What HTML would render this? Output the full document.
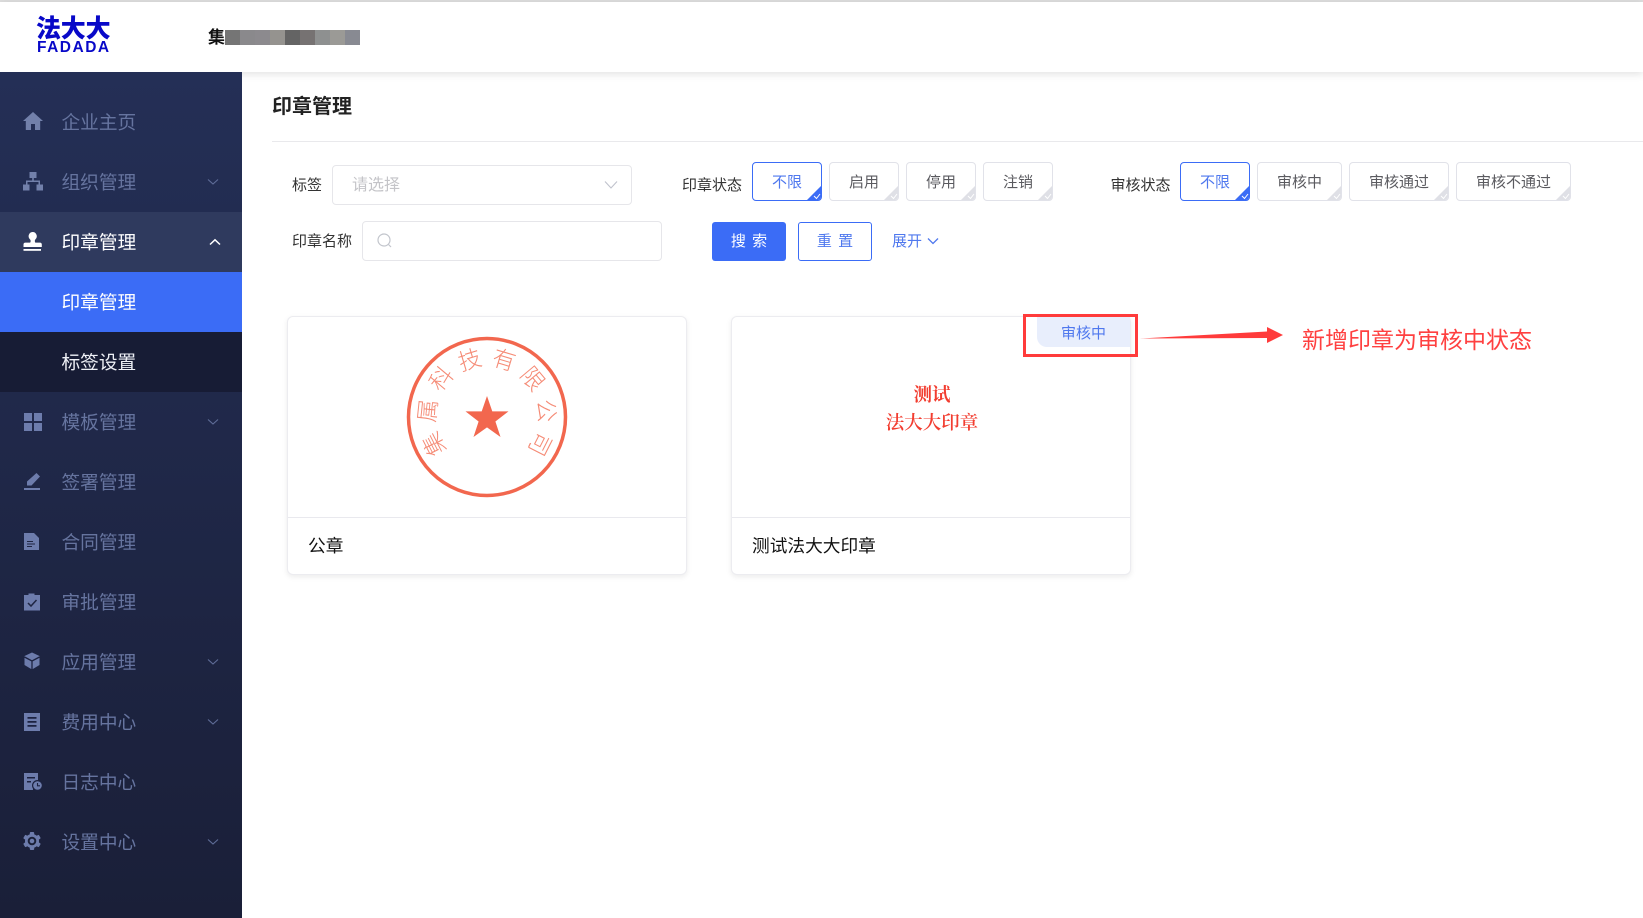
<!DOCTYPE html>
<html lang="zh"><head><meta charset="utf-8"><title>印章管理</title>
<style>
*{box-sizing:border-box}
html,body{margin:0;padding:0;width:1643px;height:918px;overflow:hidden;background:#fff}
body{position:relative;font-family:"Liberation Sans","Noto Sans CJK SC",sans-serif;color:#333}
.a{position:absolute;white-space:nowrap}
#side{position:absolute;left:0;top:72px;width:242px;height:846px;background:linear-gradient(#242f56,#1a1f38)}
.row{position:absolute;left:0;width:242px;height:60px}
.row .t{position:absolute;left:61.5px;top:1px;line-height:60px;font-size:18.7px;color:#66749f}
.row svg.i{position:absolute;left:23px;top:20px}
.row svg.c{position:absolute;left:207px;top:26px}
.chip{position:absolute;top:162px;height:39px;border:1px solid #e1e2e9;border-radius:4px;text-align:center;line-height:39px;font-size:15px;color:#5a5a5f;overflow:hidden;background:#fff}
.chip.on{border-color:#3b6cf6;color:#4f78ee}
.chip svg{position:absolute;right:-1px;bottom:-1px}
.lbl{position:absolute;font-size:15px;line-height:20px;color:#333;white-space:nowrap}
.card{position:absolute;top:316px;width:400px;height:259px;border:1px solid #ececf0;border-radius:6px;background:#fff;box-shadow:0 2px 6px rgba(0,0,0,.08)}
.card .d{position:absolute;left:0;right:0;top:200px;height:1px;background:#e9e9ee}
.card .n{position:absolute;left:20px;top:214px;line-height:30px;font-size:17.7px;color:#111;white-space:nowrap}
</style></head><body>
<div class="a" style="left:0;top:0;width:1643px;height:2px;background:#dedede"></div>
<div class="a" style="left:0;top:2px;width:1643px;height:70px;background:#fff;box-shadow:0 2px 8px rgba(0,0,0,.12)"></div>

<div class="a" style="left:36px;top:13px;font-size:25px;line-height:32px;font-weight:900;color:#0808c8;letter-spacing:-.2px">法大大</div>
<div class="a" style="left:37px;top:39px;font-size:15.5px;line-height:18px;font-weight:700;color:#0808c8;letter-spacing:1.5px;font-family:'Liberation Sans',sans-serif">FADADA</div>

<div class="a" style="left:208px;top:26px;font-size:17px;line-height:24px;font-weight:700;color:#111">集</div>
<svg class="a" style="left:225px;top:30px" width="135" height="15"><rect x="0" width="15" height="15" fill="#757575"/><rect x="15" width="15" height="15" fill="#8a898c"/><rect x="30" width="15" height="15" fill="#8c8a8e"/><rect x="45" width="15" height="15" fill="#95938f"/><rect x="60" width="15" height="15" fill="#646464"/><rect x="75" width="15" height="15" fill="#767272"/><rect x="90" width="15" height="15" fill="#8e9090"/><rect x="105" width="15" height="15" fill="#9b9a96"/><rect x="120" width="15" height="15" fill="#888a92"/></svg>

<div id="side">
<div class="row" style="top:20px"><svg class="i" style="top:19px" width="20" height="20" viewBox="0 0 20 20"><path fill="#7280aa" d="M10 1 L20 10 H17.2 V19 H12 V13 H8 V19 H2.8 V10 H0 Z"/></svg><span class="t">企业主页</span></div>
<div class="row" style="top:80px"><svg class="i" width="20" height="20" viewBox="0 0 20 20"><path fill="#7280aa" d="M6.5 0H13.500V6H10.800V8.500H17V12.500H20V18.500H13.500V12.500H15.500V10H4.500V12.500H6.500V18.500H0V12.500H3V8.500H9.200V6H6.500Z"/></svg><span class="t">组织管理</span><svg class="c" width="12" height="8" viewBox="0 0 12 8"><path d="M1 1.500L6 6L11 1.500" fill="none" stroke="#5f6d98" stroke-width="1.100"/></svg></div>
<div class="row" style="top:140px;background:#2f3a5e"><svg class="i" width="20" height="20" viewBox="0 0 20 20"><path fill="#fff" d="M9.500 0a4.200 4.200 0 0 1 3 7.200c-.8.900-.9 2.300-.2 3.400h4.700c1.100 0 1.800.8 1.800 1.800V15H.5v-2.600c0-1 .7-1.800 1.800-1.800h4.900c.7-1.100.6-2.500-.3-3.400A4.200 4.200 0 0 1 9.500 0Z"/><rect x=".5" y="17" width="17.500" height="1.800" fill="#fff"/></svg><span class="t" style="color:#fff">印章管理</span><svg class="c" style="left:209px" width="12" height="8" viewBox="0 0 12 8"><path d="M1 6.500L6 1.800L11 6.500" fill="none" stroke="#fff" stroke-width="1.500"/></svg></div>
<div class="row" style="top:200px;background:#3b6cf6"><span class="t" style="color:#fff">印章管理</span></div>
<div class="row" style="top:260px;background:#171c35"><span class="t" style="color:#eef0f6">标签设置</span></div>
<div class="row" style="top:320px"><svg class="i" style="top:21px" width="20" height="20" viewBox="0 0 20 20"><path fill="#6d7cac" d="M1 0H9V8H1ZM11 0H19V8H11ZM1 10H9V18H1ZM11 10H19V18H11Z"/></svg><span class="t">模板管理</span><svg class="c" width="12" height="8" viewBox="0 0 12 8"><path d="M1 1.500L6 6L11 1.500" fill="none" stroke="#5f6d98" stroke-width="1.100"/></svg></div>
<div class="row" style="top:380px"><svg class="i" width="20" height="20" viewBox="0 0 20 20"><path fill="#6d7cac" d="M13.500 1L17 4.500L8.500 13.500H4V9.500ZM1 16H17V18H1Z"/></svg><span class="t">签署管理</span></div>
<div class="row" style="top:440px"><svg class="i" width="20" height="20" viewBox="0 0 20 20"><path fill="#6d7cac" d="M1 1H11L16 6V18H1Z"/><path fill="#1f2542" d="M4 9H10V10H4ZM4 11.500H12V12.500H4ZM4 14H9V15H4Z"/></svg><span class="t">合同管理</span></div>
<div class="row" style="top:500px"><svg class="i" width="20" height="20" viewBox="0 0 20 20"><path fill="#6d7cac" d="M1 3H5.500V1.500H11.500V3H17V18.500H1Z"/><path d="M5 11L8 14L13.500 8" fill="none" stroke="#1f2542" stroke-width="1.500"/></svg><span class="t">审批管理</span></div>
<div class="row" style="top:560px"><svg class="i" width="20" height="20" viewBox="0 0 20 20"><path fill="#6d7cac" d="M9 .5L16.500 4V13L9 17.500L1.500 13V4Z"/><path d="M1.500 5L9 9L16.500 5M9 9V17.500" fill="none" stroke="#1c2240" stroke-width="1.300"/></svg><span class="t">应用管理</span><svg class="c" width="12" height="8" viewBox="0 0 12 8"><path d="M1 1.500L6 6L11 1.500" fill="none" stroke="#5f6d98" stroke-width="1.100"/></svg></div>
<div class="row" style="top:620px"><svg class="i" width="20" height="20" viewBox="0 0 20 20"><path fill="#6d7cac" d="M1 1H17V19H1Z"/><path fill="#1c2240" d="M4.500 5H13.500V6.800H4.500ZM4.500 9H13.500V10.800H4.500ZM4.500 13H13.500V14.800H4.500Z"/></svg><span class="t">费用中心</span><svg class="c" width="12" height="8" viewBox="0 0 12 8"><path d="M1 1.500L6 6L11 1.500" fill="none" stroke="#5f6d98" stroke-width="1.100"/></svg></div>
<div class="row" style="top:680px"><svg class="i" width="20" height="20" viewBox="0 0 20 20"><path fill="#6d7cac" d="M1 1H15V10H10V18H1Z"/><path fill="#1c2240" d="M4 5H12V6.500H4ZM4 9H8V10.500H4Z"/><circle cx="14.500" cy="13.500" r="5.500" fill="#1c2240"/><circle cx="14.500" cy="13.500" r="4.300" fill="#6d7cac"/><path d="M14.500 11V13.800H17" fill="none" stroke="#1c2240" stroke-width="1.100"/></svg><span class="t">日志中心</span></div>
<div class="row" style="top:740px"><svg class="i" style="top:19px" width="20" height="20" viewBox="0 0 20 20"><g fill="#6d7cac"><circle cx="9" cy="10" r="7"/><rect x="6.800" y="1" width="4.400" height="18" rx="1"/><rect x="6.800" y="1" width="4.400" height="18" rx="1" transform="rotate(60 9 10)"/><rect x="6.800" y="1" width="4.400" height="18" rx="1" transform="rotate(120 9 10)"/></g><circle cx="9" cy="10" r="3.300" fill="none" stroke="#1a2038" stroke-width="2"/></svg><span class="t">设置中心</span><svg class="c" width="12" height="8" viewBox="0 0 12 8"><path d="M1 1.500L6 6L11 1.500" fill="none" stroke="#5f6d98" stroke-width="1.100"/></svg></div>
</div>

<div class="a" style="left:272px;top:93px;font-size:20px;line-height:28px;font-weight:700;color:#222">印章管理</div>
<div class="a" style="left:272px;top:141px;width:1371px;height:1px;background:#e9e9ec"></div>

<div class="lbl" style="left:292px;top:175.5px">标签</div>
<div class="a" style="left:332px;top:165px;width:300px;height:40px;border:1px solid #e6e6ea;border-radius:4px;font-size:16px;line-height:40px;padding-left:19px;color:#c4c4c8">请选择</div>
<svg class="a" style="left:604px;top:180px" width="14" height="10" viewBox="0 0 14 10"><path d="M1 1.500L7 8L13 1.500" fill="none" stroke="#bfc2cc" stroke-width="1.100"/></svg>
<div class="lbl" style="left:292px;top:232px">印章名称</div>
<div class="a" style="left:362px;top:221px;width:300px;height:40px;border:1px solid #e6e6ea;border-radius:4px"></div>
<svg class="a" style="left:376px;top:232px" width="18" height="18" viewBox="0 0 18 18"><circle cx="8" cy="8" r="6" fill="none" stroke="#c2c5cc" stroke-width="1.200"/><path d="M12.500 12.500L15 15" stroke="#c2c5cc" stroke-width="1.200"/></svg>

<div class="lbl" style="left:682px;top:175.5px">印章状态</div>
<div class="chip on" style="left:752px;width:70px">不限<svg width="16" height="16" viewBox="0 0 16 16"><path d="M16 0V16H0Z" fill="#3b6cf6"/><path d="M8 11L10.500 13.500L14 9" fill="none" stroke="#fff" stroke-width="1"/></svg></div>
<div class="chip" style="left:829px;width:70px">启用<svg width="16" height="16" viewBox="0 0 16 16"><path d="M16 0V16H0Z" fill="#dfe0e6"/><path d="M8 11L10.500 13.500L14 9" fill="none" stroke="#fff" stroke-width="1"/></svg></div>
<div class="chip" style="left:906px;width:70px">停用<svg width="16" height="16" viewBox="0 0 16 16"><path d="M16 0V16H0Z" fill="#dfe0e6"/><path d="M8 11L10.500 13.500L14 9" fill="none" stroke="#fff" stroke-width="1"/></svg></div>
<div class="chip" style="left:983px;width:70px">注销<svg width="16" height="16" viewBox="0 0 16 16"><path d="M16 0V16H0Z" fill="#dfe0e6"/><path d="M8 11L10.500 13.500L14 9" fill="none" stroke="#fff" stroke-width="1"/></svg></div>

<div class="lbl" style="left:1110.5px;top:175.5px">审核状态</div>
<div class="chip on" style="left:1180px;width:70px">不限<svg width="16" height="16" viewBox="0 0 16 16"><path d="M16 0V16H0Z" fill="#3b6cf6"/><path d="M8 11L10.500 13.500L14 9" fill="none" stroke="#fff" stroke-width="1"/></svg></div>
<div class="chip" style="left:1257px;width:85px">审核中<svg width="16" height="16" viewBox="0 0 16 16"><path d="M16 0V16H0Z" fill="#dfe0e6"/><path d="M8 11L10.500 13.500L14 9" fill="none" stroke="#fff" stroke-width="1"/></svg></div>
<div class="chip" style="left:1349px;width:100px">审核通过<svg width="16" height="16" viewBox="0 0 16 16"><path d="M16 0V16H0Z" fill="#dfe0e6"/><path d="M8 11L10.500 13.500L14 9" fill="none" stroke="#fff" stroke-width="1"/></svg></div>
<div class="chip" style="left:1456px;width:115px">审核不通过<svg width="16" height="16" viewBox="0 0 16 16"><path d="M16 0V16H0Z" fill="#dfe0e6"/><path d="M8 11L10.500 13.500L14 9" fill="none" stroke="#fff" stroke-width="1"/></svg></div>

<div class="a" style="left:712px;top:222px;width:74px;height:39px;background:#3b6cf6;border-radius:3px;color:#fff;font-size:15px;line-height:40px;text-align:center;letter-spacing:1px;padding-left:1px">搜 索</div>
<div class="a" style="left:798px;top:222px;width:74px;height:39px;border:1px solid #3b6cf6;border-radius:3px;color:#4f78ee;font-size:15px;line-height:38px;text-align:center;letter-spacing:1px;padding-left:1px">重 置</div>
<div class="a" style="left:892px;top:232px;font-size:15px;line-height:20px;color:#4f78ee">展开</div>
<svg class="a" style="left:927px;top:237px" width="12" height="8" viewBox="0 0 12 8"><path d="M1 1.500L6 6.500L11 1.500" fill="none" stroke="#4f78ee" stroke-width="1.300"/></svg>

<div class="card" style="left:287px"><div class="d"></div><div class="n">公章</div></div>
<svg class="a" style="left:399px;top:329px" width="176" height="176" viewBox="399 329 176 176">
<circle cx="487" cy="417" r="78.500" fill="none" stroke="#f2674e" stroke-width="3.500"/>
<path fill="#f2674e" d="M487 396 L492.300 411.400 L508.500 411.400 L495.400 421.500 L500.500 437 L487 427.400 L473.500 437 L478.600 421.500 L465.500 411.400 L481.700 411.400 Z"/>
<g font-size="23" fill="#f58b76" text-anchor="middle" font-weight="300" font-family="'Noto Sans CJK SC',sans-serif">
<text x="487" y="365.500" transform="rotate(-117 487 417)">集</text>
<text x="487" y="365.500" transform="rotate(-84 487 417)">属</text>
<text x="487" y="365.500" transform="rotate(-50 487 417)">科</text>
<text x="487" y="365.500" transform="rotate(-16.700 487 417)">技</text>
<text x="487" y="365.500" transform="rotate(16.700 487 417)">有</text>
<text x="487" y="365.500" transform="rotate(50 487 417)">限</text>
<text x="487" y="365.500" transform="rotate(84 487 417)">公</text>
<text x="487" y="365.500" transform="rotate(117 487 417)">司</text>
</g></svg>

<div class="card" style="left:731px"><div class="d"></div><div class="n">测试法大大印章</div></div>
<div class="a" style="left:832px;top:383px;width:200px;text-align:center;font-family:'Liberation Serif','Noto Serif CJK SC',serif;font-size:18.500px;line-height:27.500px;color:#f23d30;white-space:normal"><span style="font-weight:700">测试</span><br><span style="font-weight:600">法大大印章</span></div>
<div class="a" style="left:1037px;top:317px;width:93px;height:30px;background:#e8eefc;border-radius:0 0 0 10px;text-align:center;font-size:15px;line-height:33px;color:#4f78ee">审核中</div>
<div class="a" style="left:1023px;top:314px;width:115px;height:43px;border:3px solid #ff3b3b"></div>
<svg class="a" style="left:1138px;top:322px" width="150" height="24" viewBox="1138 322 150 24"><path fill="#ff3b3b" d="M1140 338.500 L1267 331.500 V327 L1283 335 L1267 343 V338 Z"/></svg>
<div class="a" style="left:1302px;top:322px;font-size:23px;line-height:36px;color:#ff4040">新增印章为审核中状态</div>
</body></html>
